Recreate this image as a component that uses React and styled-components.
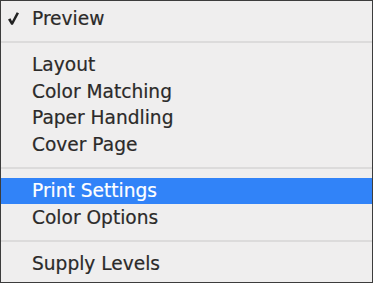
import React from 'react'
import styled, { createGlobalStyle } from 'styled-components'

const GlobalStyle = createGlobalStyle`
  html, body {
    margin: 0;
    padding: 0;
    background: #2b2b2b;
  }
`

const sections = [
  [{ label: 'Preview', checked: true }],
  [{ label: 'Layout' }, { label: 'Color Matching' }, { label: 'Paper Handling' }, { label: 'Cover Page' }],
  [{ label: 'Print Settings', selected: true }, { label: 'Color Options' }],
  [{ label: 'Supply Levels' }],
]

const CheckIcon = () => (
  <svg width="11" height="13" viewBox="0 0 11 13">
    <path d="M0 7.4 L2.5 6.3 L4 9.3 L8.7 0.3 L11 1.3 L4.9 12.8 L3.2 12.8 Z" fill="#222" />
  </svg>
)

function App() {
  return (
    <>
      <GlobalStyle />
      <Menu>
        {sections.map((items, i) => (
          <React.Fragment key={i}>
            {i > 0 && <Separator />}
            {items.map((item) => (
              <Item key={item.label} $selected={item.selected}>
                <Check>{item.checked && <CheckIcon />}</Check>
                {item.label}
              </Item>
            ))}
          </React.Fragment>
        ))}
      </Menu>
    </>
  )
}

export default App

const Menu = styled.div`
  box-sizing: border-box;
  width: 373px;
  height: 283px;
  padding: 4px 0;
  background: #efeeee;
  border: 1px solid #3c3c3c;
  font-family: "DejaVu Sans", "Liberation Sans", sans-serif;
  font-size: 18.6px;
  color: #2e2e2e;
`

const Item = styled.div`
  display: flex;
  align-items: center;
  height: 26.5px;
  padding-left: 7px;
  background: ${(p) => (p.$selected ? '#3183f8' : 'transparent')};
  color: ${(p) => (p.$selected ? '#ffffff' : '#2b2a29')};
  -webkit-text-stroke: 0.2px currentColor;
`

const Check = styled.span`
  display: flex;
  align-items: center;
  width: 24px;
  padding-top: 1px;
`

const Separator = styled.div`
  height: 2px;
  margin: 9px 0;
  background: #dcdbdb;
`
